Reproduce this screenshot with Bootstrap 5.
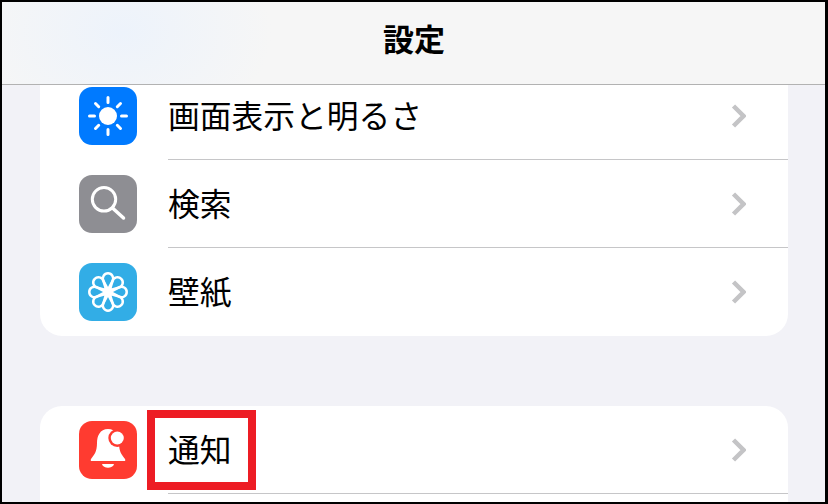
<!DOCTYPE html>
<html lang="ja">
<head>
  <meta charset="UTF-8" />
  <meta name="viewport" content="width=device-width, initial-scale=1" />
  <title>設定</title>
  <link href="https://cdn.jsdelivr.net/npm/bootstrap@5.3.0/dist/css/bootstrap.min.css" rel="stylesheet" />
  <style>
    body {
      margin: 0;
      background: #f2f2f7;
      font-family: "Liberation Sans", "Noto Sans CJK JP", sans-serif;
      color: #000;
    }
    .phone-frame {
      width: 828px;
      height: 504px;
      overflow: hidden;
      border-style: solid;
      border-color: #000;
      border-width: 2px 3px 2px 2px;
      background: #f2f2f7;
    }
    .top-bar {
      position: relative;
      z-index: 2;
      height: 83px;
      border-bottom: 1px solid #b2b2b2;
      background: radial-gradient(ellipse 150px 110px at 120px 30px, #edf3fb 0%, rgba(237, 243, 251, 0) 100%), #f6f6f6;
      font-size: 31px;
      font-weight: 700;
      padding: 0 0 3px 1px;
    }
    .settings-group {
      margin: 0 37px 0 38px;
      border-radius: 22px 22px 0 0;
      background: #fff;
      border: 0;
      min-height: 120px;
    }
    .settings-group.first-group {
      margin-top: -13px;
      margin-bottom: 70px;
      border-radius: 0 0 22px 22px;
    }
    .settings-row {
      position: relative;
      height: 88px;
      padding: 0 42px 0 39px;
      background: transparent;
      border: 0;
      color: #000;
      font-size: 31.75px;
      line-height: 1;
    }
    .row-label { padding-top: 3px; }
    .settings-row.has-line::after {
      content: "";
      position: absolute;
      left: 128px;
      right: 0;
      bottom: 0;
      height: 1px;
      background: #c6c6c8;
    }
    .app-icon {
      width: 58px;
      height: 58px;
      border-radius: 13px;
      flex: none;
      margin-right: 31px;
    }
    .icon-blue { background: #007aff; }
    .icon-gray { background: #8e8e93; }
    .icon-sky { background: #32ade6; }
    .icon-red { background: #ff3b30; }
    .row-chevron { flex: none; }
    .red-mark {
      position: absolute;
      left: 107px;
      top: 4px;
      width: 109px;
      height: 80px;
      border: 8px solid #ed1c24;
    }
  </style>
</head>
<body>
  <div class="phone-frame">
    <header class="top-bar d-flex align-items-center justify-content-center">設定</header>

    <div class="list-group settings-group first-group">
      <div class="list-group-item settings-row has-line d-flex align-items-center">
        <svg class="app-icon icon-blue" viewBox="0 0 58 58">
          <circle cx="29" cy="29" r="9" fill="#fff" />
          <path d="M29 10.500v5M29 42.500v5M10.500 29h5M42.500 29h5M16.500 16.500l3.200 3.200M38.300 38.300l3.200 3.200M16.500 41.500l3.200-3.200M38.300 19.700l3.200-3.200" stroke="#fff" stroke-width="3" stroke-linecap="round" />
        </svg>
        <span class="row-label flex-grow-1">画面表示と明るさ</span>
        <svg class="row-chevron" width="15" height="26" viewBox="0 0 15 26"><path d="M2.500 3l10 10-10 10" fill="none" stroke="#c4c4c6" stroke-width="4.500" /></svg>
      </div>
      <div class="list-group-item settings-row has-line d-flex align-items-center">
        <svg class="app-icon icon-gray" viewBox="0 0 58 58">
          <circle cx="25" cy="24.300" r="11.700" fill="none" stroke="#fff" stroke-width="3" />
          <path d="M33.500 33l11 10" stroke="#fff" stroke-width="3.500" stroke-linecap="round" />
        </svg>
        <span class="row-label flex-grow-1">検索</span>
        <svg class="row-chevron" width="15" height="26" viewBox="0 0 15 26"><path d="M2.500 3l10 10-10 10" fill="none" stroke="#c4c4c6" stroke-width="4.500" /></svg>
      </div>
      <div class="list-group-item settings-row d-flex align-items-center">
        <svg class="app-icon icon-sky" viewBox="0 0 58 58">
          <defs>
            <path id="petal" d="M29 26.500L24.400 17.900A5.200 5.200 0 1 1 33.600 17.900Z" fill="none" stroke="#fff" stroke-width="2.500" stroke-linejoin="round" />
          </defs>
          <use href="#petal" />
          <use href="#petal" transform="rotate(45 29 29)" />
          <use href="#petal" transform="rotate(90 29 29)" />
          <use href="#petal" transform="rotate(135 29 29)" />
          <use href="#petal" transform="rotate(180 29 29)" />
          <use href="#petal" transform="rotate(225 29 29)" />
          <use href="#petal" transform="rotate(270 29 29)" />
          <use href="#petal" transform="rotate(315 29 29)" />
          <circle cx="29" cy="29" r="2.500" fill="#fff" />
        </svg>
        <span class="row-label flex-grow-1">壁紙</span>
        <svg class="row-chevron" width="15" height="26" viewBox="0 0 15 26"><path d="M2.500 3l10 10-10 10" fill="none" stroke="#c4c4c6" stroke-width="4.500" /></svg>
      </div>
    </div>

    <div class="list-group settings-group">
      <div class="list-group-item settings-row has-line d-flex align-items-center">
        <svg class="app-icon icon-red" viewBox="0 0 58 58">
          <path d="M29 8C21 8 18 15 18 22C18 31 15 34 12 38Q11 40 13 40H45Q47 40 46 38C43 34 40 31 40 22C40 15 37 8 29 8Z" fill="#fff" />
          <path d="M23 43H35C34 48 24 48 23 43Z" fill="#fff" />
          <circle cx="38.300" cy="17" r="9" fill="#ff3b30" />
          <circle cx="38.300" cy="17" r="6.500" fill="#fff" />
        </svg>
        <span class="row-label flex-grow-1">通知</span>
        <svg class="row-chevron" width="15" height="26" viewBox="0 0 15 26"><path d="M2.500 3l10 10-10 10" fill="none" stroke="#c4c4c6" stroke-width="4.500" /></svg>
        <div class="red-mark"></div>
      </div>
    </div>
  </div>

  <script src="https://cdn.jsdelivr.net/npm/bootstrap@5.3.0/dist/js/bootstrap.bundle.min.js"></script>
</body>
</html>
